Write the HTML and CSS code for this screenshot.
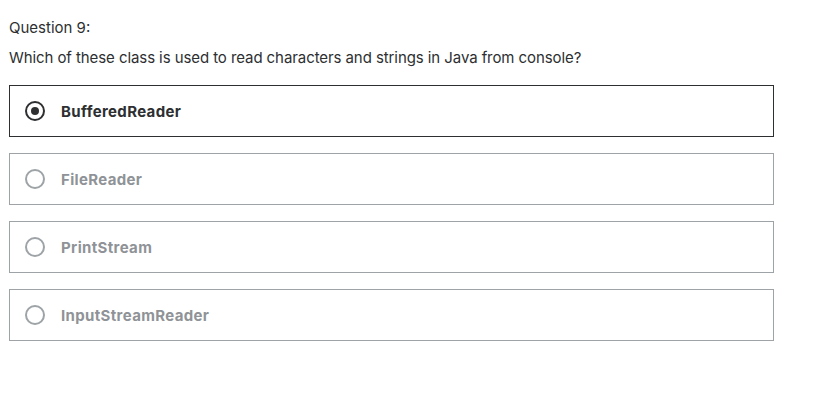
FILE: index.html
```html
<!DOCTYPE html>
<html>
<head>
<meta charset="utf-8">
<link rel="stylesheet" href="styles.css">
</head>
<body>
<div class="quiz">
  <div class="qnum">Question 9:</div>
  <div class="qtext">Which of these class is used to read characters and strings in Java from console?</div>
  <ul class="answers">
    <li class="answer selected">
      <span class="radio"><span class="dot"></span></span>
      <span class="label">BufferedReader</span>
    </li>
    <li class="answer">
      <span class="radio"></span>
      <span class="label">FileReader</span>
    </li>
    <li class="answer">
      <span class="radio"></span>
      <span class="label">PrintStream</span>
    </li>
    <li class="answer">
      <span class="radio"></span>
      <span class="label">InputStreamReader</span>
    </li>
  </ul>
</div>
</body>
</html>
```
FILE: styles.css
```css
html, body {
  margin: 0;
  padding: 0;
  background: #ffffff;
}
body {
  font-family: Inter, "Liberation Sans", sans-serif;
  color: #2d2f31;
}
.quiz {
  padding: 17px 0 0 9px;
  width: 765px;
}
.qnum {
  font-size: 15px;
  line-height: 22px;
}
.qtext {
  font-size: 15px;
  line-height: 22px;
  margin-top: 8px;
  letter-spacing: -0.08px;
}
.answers {
  list-style: none;
  margin: 16px 0 0 0;
  padding: 0;
  display: flex;
  flex-direction: column;
  gap: 16px;
}
.answer {
  box-sizing: border-box;
  height: 52px;
  border: 1px solid #9da3a7;
  display: flex;
  align-items: center;
  padding-left: 15px;
  color: #8f9397;
}
.answer.selected {
  border-color: #2d2f31;
  color: #2d2f31;
}
.radio {
  box-sizing: border-box;
  width: 20px;
  height: 20px;
  border: 2px solid #9da3a7;
  border-radius: 50%;
  display: flex;
  align-items: center;
  justify-content: center;
  flex: none;
}
.selected .radio {
  border-color: #2d2f31;
}
.dot {
  width: 8px;
  height: 8px;
  border-radius: 50%;
  background: #2d2f31;
}
.label {
  margin-left: 16px;
  font-size: 15px;
  font-weight: 700;
  letter-spacing: 0.35px;
}
```
